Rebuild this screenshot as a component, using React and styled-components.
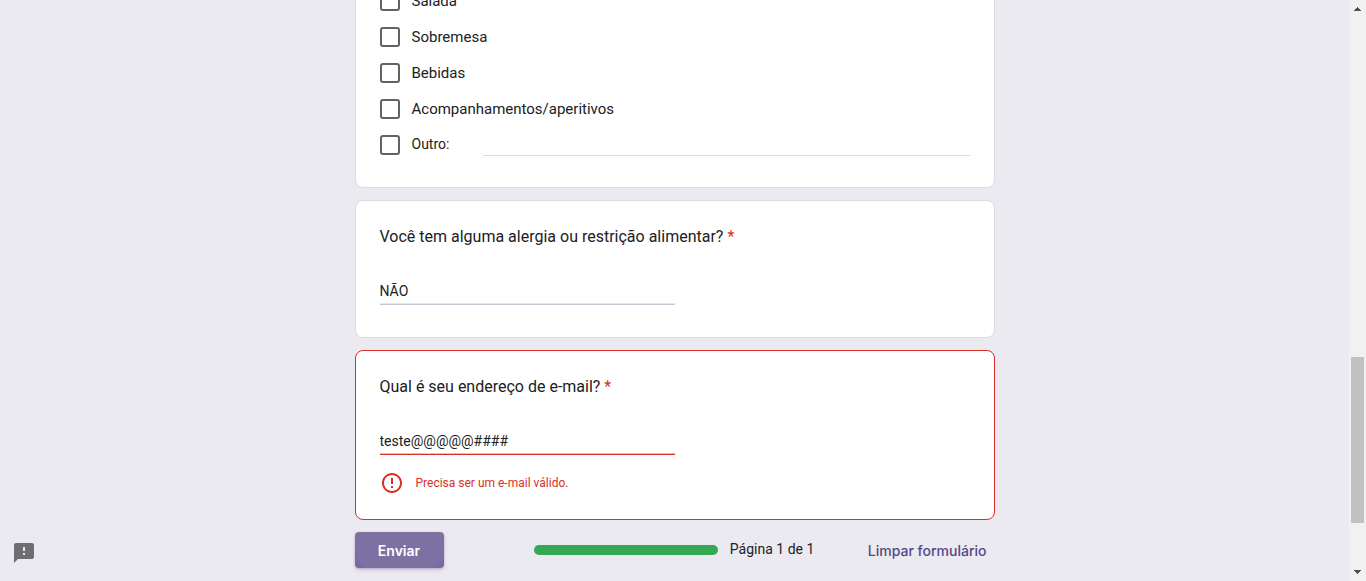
import React from "react";
import styled, { createGlobalStyle } from "styled-components";

const GlobalStyle = createGlobalStyle`
  *, *::before, *::after { box-sizing: border-box; }
  body {
    margin: 0;
    background: #ebeaf0;
    color: #202124;
    font-family: Roboto, "Liberation Sans", sans-serif;
  }
  button, input { font: inherit; color: inherit; }
`;

const Shell = styled.div`
  display: flex;
  height: 100vh;
  overflow: hidden;
`;

const Viewport = styled.main`
  flex: 1;
  min-width: 0;
  overflow: hidden;
`;

/* The form is scrolled, so its first visible card starts above the window. */
const Form = styled.form`
  display: flex;
  flex-direction: column;
  gap: 12px;
  width: 100%;
  max-width: 640px;
  margin: -42px auto 0;
`;

const Card = styled.section`
  padding: 24px;
  background: #fff;
  border: 1px solid ${(p) => (p.$invalid ? "#d93025" : "#dadce0")};
  border-radius: 8px;
`;

const OptionRow = styled.div`
  display: flex;
  align-items: center;
  height: 36px;
`;

const OptionLabel = styled.label`
  padding-left: 12px;
  font-size: 15px;
  line-height: 20px;
`;

const OtherLabel = styled(OptionLabel)`
  flex: none;
  width: 83px;
  padding-bottom: 2px;
  font-size: 14px;
`;

const Checkbox = styled.input`
  appearance: none;
  flex: none;
  width: 20px;
  height: 20px;
  margin: 0;
  border: 2px solid #5f6368;
  border-radius: 3px;
  background: #fff;
`;

const OtherInput = styled.input`
  flex: 1;
  min-width: 0;
  height: 22px;
  padding: 0;
  border: 0;
  border-bottom: 1px solid #dadce0;
  border-radius: 0;
  background: transparent;
  font-size: 14px;
  outline: none;
`;

const Question = styled.label`
  display: block;
  font-size: 16px;
  line-height: 24px;
`;

const Required = styled.span`
  color: #d93025;
`;

const Answer = styled.input`
  display: block;
  width: 50%;
  height: 28px;
  margin: 28px 0 8px;
  padding: 0;
  border: 0;
  border-bottom: 1px solid ${(p) => (p.$invalid ? "#d93025" : "#c6c5d2")};
  border-radius: 0;
  box-shadow: inset 0 -1px ${(p) => (p.$invalid ? "#f2b8b3" : "#e8e7ed")};
  background: transparent;
  font-size: 14px;
  outline: none;
`;

const ErrorMessage = styled.p`
  display: flex;
  align-items: center;
  gap: 12px;
  margin: 16px 0 0;
  color: #d93025;
  font-size: 12px;
  line-height: 24px;
`;

const Footer = styled.footer`
  display: flex;
  align-items: center;
  height: 36px;
`;

const SubmitButton = styled.button`
  height: 36px;
  min-width: 89px;
  padding: 0 16px;
  border: 0;
  border-radius: 4px;
  background: radial-gradient(circle at 50% 0, #7d71a3 48px, #6a5e98 60px);
  color: #fff;
  font-family: Inter, sans-serif;
  font-size: 14px;
  font-weight: 600;
  box-shadow: 0 2px 4px rgba(103, 58, 183, 0.2), 0 1px 2px rgba(60, 64, 67, 0.2);
`;

const Progress = styled.div`
  display: flex;
  align-items: center;
  gap: 12px;
  margin: 0 42px 0 auto;
  font-size: 14px;
  line-height: 20px;
`;

const ProgressBar = styled.div`
  width: 184px;
  height: 10px;
  border-radius: 5px;
  background: #34a853;
`;

const ProgressText = styled.span`
  min-width: 88px;
  padding-bottom: 2px;
`;

const ClearButton = styled.button`
  padding: 8px;
  border: 0;
  background: transparent;
  color: #534688;
  font-family: Inter, sans-serif;
  font-size: 14px;
  font-weight: 500;
`;

const FeedbackButton = styled.button`
  position: fixed;
  left: 12px;
  bottom: 16px;
  display: flex;
  padding: 0;
  border: 0;
  background: transparent;
  color: #6e6d71;
`;

const Scrollbar = styled.div`
  display: flex;
  flex: none;
  flex-direction: column;
  width: 17px;
  background: #f1f1f1;
`;

const ScrollArrow = styled.svg`
  display: block;
  flex: none;
  fill: #505050;
`;

const ScrollSpace = styled.div`
  flex: ${(p) => p.$share} 1 0;
`;

const ScrollThumb = styled(ScrollSpace)`
  margin: 0 2px;
  background: #c1c1c1;
`;

const OPTIONS = [
  { id: "salada", label: "Salada" },
  { id: "sobremesa", label: "Sobremesa" },
  { id: "bebidas", label: "Bebidas" },
  { id: "acompanhamentos", label: "Acompanhamentos/aperitivos" },
];

function Icon({ path }) {
  return (
    <svg width="24" height="24" viewBox="0 0 24 24" fill="currentColor" aria-hidden="true">
      <path d={path} />
    </svg>
  );
}

export default function App() {
  return (
    <>
      <GlobalStyle />
      <Shell>
        <Viewport>
          <Form noValidate onSubmit={(e) => e.preventDefault()}>
            <Card>
              {OPTIONS.map((o) => (
                <OptionRow key={o.id}>
                  <Checkbox type="checkbox" id={o.id} />
                  <OptionLabel htmlFor={o.id}>{o.label}</OptionLabel>
                </OptionRow>
              ))}
              <OptionRow>
                <Checkbox type="checkbox" id="outro" />
                <OtherLabel htmlFor="outro">Outro:</OtherLabel>
                <OtherInput type="text" aria-label="Outra resposta" />
              </OptionRow>
            </Card>

            <Card>
              <Question htmlFor="alergia">
                Você tem alguma alergia ou restrição alimentar? <Required>*</Required>
              </Question>
              <Answer id="alergia" type="text" defaultValue="NÃO" />
            </Card>

            <Card $invalid>
              <Question htmlFor="email">
                Qual é seu endereço de e-mail? <Required>*</Required>
              </Question>
              <Answer
                $invalid
                id="email"
                type="text"
                defaultValue="teste@@@@@####"
                aria-invalid="true"
                aria-describedby="email-erro"
              />
              <ErrorMessage id="email-erro" role="alert">
                <Icon path="M11 15h2v2h-2zm0-8h2v6h-2zm.99-5C6.47 2 2 6.48 2 12s4.47 10 9.99 10C17.52 22 22 17.52 22 12S17.52 2 11.99 2zM12 20c-4.42 0-8-3.58-8-8s3.58-8 8-8 8 3.58 8 8-3.58 8-8 8z" />
                Precisa ser um e-mail válido.
              </ErrorMessage>
            </Card>

            <Footer>
              <SubmitButton type="submit">Enviar</SubmitButton>
              <Progress>
                <ProgressBar
                  role="progressbar"
                  aria-label="Progresso"
                  aria-valuemin={0}
                  aria-valuemax={1}
                  aria-valuenow={1}
                />
                <ProgressText>Página 1 de 1</ProgressText>
              </Progress>
              <ClearButton type="reset">Limpar formulário</ClearButton>
            </Footer>
          </Form>
        </Viewport>

        <Scrollbar aria-hidden="true">
          <ScrollArrow width="17" height="17" viewBox="0 0 17 17">
            <path d="M5 11h7v-1h-1v-1h-1v-1h-1v-1h-1v1h-1v1h-1v1h-1z" />
          </ScrollArrow>
          <ScrollSpace $share={340} />
          <ScrollThumb $share={166} />
          <ScrollSpace $share={41} />
          <ScrollArrow width="17" height="17" viewBox="0 0 17 17">
            <path d="M5 6h7v1h-1v1h-1v1h-1v1h-1v-1h-1v-1h-1v-1h-1z" />
          </ScrollArrow>
        </Scrollbar>
      </Shell>
      <FeedbackButton type="button" aria-label="Enviar feedback">
        <Icon path="M20 2H4c-1.1 0-1.99.9-1.99 2L2 22l4-4h14c1.1 0 2-.9 2-2V4c0-1.1-.9-2-2-2zm-7 12h-2v-2h2v2zm0-4h-2V6h2v4z" />
      </FeedbackButton>
    </>
  );
}
